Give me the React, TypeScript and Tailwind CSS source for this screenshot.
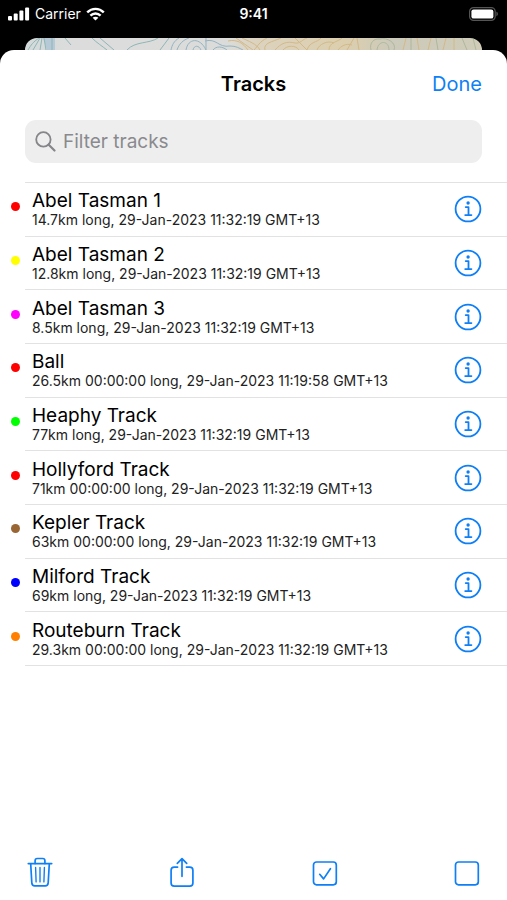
import { useState } from 'react';

interface Track {
    name: string;
    detail: string;
    color: string;
}

const TRACKS: Track[] = [
    { name: 'Abel Tasman 1', detail: '14.7km long, 29-Jan-2023 11:32:19 GMT+13', color: 'bg-[#ff0000]' },
    { name: 'Abel Tasman 2', detail: '12.8km long, 29-Jan-2023 11:32:19 GMT+13', color: 'bg-[#ffff00]' },
    { name: 'Abel Tasman 3', detail: '8.5km long, 29-Jan-2023 11:32:19 GMT+13', color: 'bg-[#ff00ff]' },
    { name: 'Ball', detail: '26.5km 00:00:00 long, 29-Jan-2023 11:19:58 GMT+13', color: 'bg-[#ff0000]' },
    { name: 'Heaphy Track', detail: '77km long, 29-Jan-2023 11:32:19 GMT+13', color: 'bg-[#00ff00]' },
    { name: 'Hollyford Track', detail: '71km 00:00:00 long, 29-Jan-2023 11:32:19 GMT+13', color: 'bg-[#ff0000]' },
    { name: 'Kepler Track', detail: '63km 00:00:00 long, 29-Jan-2023 11:32:19 GMT+13', color: 'bg-[#996633]' },
    { name: 'Milford Track', detail: '69km long, 29-Jan-2023 11:32:19 GMT+13', color: 'bg-[#0000ff]' },
    { name: 'Routeburn Track', detail: '29.3km 00:00:00 long, 29-Jan-2023 11:32:19 GMT+13', color: 'bg-[#ff8000]' },
];

// ─────────────────────────────────────────────────────────────
// Icons
// ─────────────────────────────────────────────────────────────

function SignalIcon() {
    return (
        <svg width="22" height="14" viewBox="0 0 22 14" fill="currentColor" aria-hidden="true">
            <rect x="0" y="9" width="4" height="4.5" rx="1" />
            <rect x="5.7" y="6.5" width="4" height="7" rx="1" />
            <rect x="11.4" y="3.6" width="4" height="9.9" rx="1" />
            <rect x="17.1" y="0.5" width="4" height="13" rx="1" />
        </svg>
    );
}

function WifiIcon() {
    return (
        <svg width="19" height="14" viewBox="0 0 19 14" fill="none" stroke="currentColor" strokeWidth="2.4" aria-hidden="true">
            <path d="M1.2 5.4C5.9.7 13.1.7 17.8 5.4" />
            <path d="M4.4 8.7c2.9-2.9 7.3-2.9 10.2 0" />
            <path d="M9.5 13.6 6.6 10.8c1.6-1.5 4.2-1.5 5.8 0z" fill="currentColor" stroke="none" />
        </svg>
    );
}

function BatteryIcon() {
    return (
        <svg width="30" height="14" viewBox="0 0 30 14" aria-hidden="true">
            <rect x="0.6" y="0.6" width="25.6" height="12.8" rx="4" fill="none" stroke="#555555" strokeWidth="1.2" />
            <rect x="2.4" y="2.4" width="22" height="9.2" rx="2.2" fill="#fff" />
            <path d="M27.4 4.8c2 .6 2 3.8 0 4.4z" fill="#555555" />
        </svg>
    );
}

function SearchIcon() {
    return (
        <svg width="21" height="21" viewBox="0 0 21 21" fill="none" stroke="#85858a" strokeWidth="1.8" strokeLinecap="round" aria-hidden="true">
            <circle cx="8.4" cy="8.4" r="7.2" />
            <path d="m13.7 13.7 5.8 5.8" strokeWidth="2.2" />
        </svg>
    );
}

function InfoIcon() {
    return (
        <svg width="28" height="28" viewBox="0 0 28 28" fill="none" stroke="currentColor" strokeWidth="1.8" aria-hidden="true">
            <circle cx="14" cy="14" r="12.4" />
            <circle cx="14.1" cy="8" r="1.7" fill="currentColor" stroke="none" />
            <path d="M11.7 12.1h2.8v7.8M11.2 20.1h6.2" strokeLinecap="round" strokeLinejoin="round" />
        </svg>
    );
}

function TrashIcon() {
    return (
        <svg width="26" height="32" viewBox="0 0 26 32" fill="none" stroke="currentColor" strokeWidth="1.7" strokeLinecap="round" strokeLinejoin="round" aria-hidden="true">
            <path d="M1.3 7.6h23.4" />
            <path d="M8.1 7.4V4.8c0-1.5.8-2.3 2.2-2.3h5.4c1.4 0 2.2.8 2.2 2.3v2.6" />
            <path d="m3.7 7.8 1.1 19c.1 2 1.1 3.1 3 3.1h10.4c1.9 0 2.9-1.1 3-3.1l1.1-19" />
            <path d="m8.6 11.5.5 14.4M13 11.5v14.4M17.4 11.5l-.5 14.4" strokeWidth="1.4" />
        </svg>
    );
}

function ShareIcon() {
    return (
        <svg width="26" height="32" viewBox="0 0 26 32" fill="none" stroke="currentColor" strokeWidth="1.7" strokeLinecap="round" strokeLinejoin="round" aria-hidden="true">
            <path d="M8.6 11.1H5.3c-2.2 0-3.2 1-3.2 3.2v12.6c0 2.2 1 3.2 3.2 3.2h15.4c2.2 0 3.2-1 3.2-3.2V14.3c0-2.2-1-3.2-3.2-3.2h-3.3" />
            <path d="M13 20.3V2.9M8.3 7.4 13 2.7l4.7 4.7" />
        </svg>
    );
}

function BoxIcon({ checked = false }: { checked?: boolean }) {
    return (
        <svg width="26" height="28" viewBox="0 0 26 28" fill="none" stroke="currentColor" strokeWidth="1.7" strokeLinecap="round" strokeLinejoin="round" aria-hidden="true">
            <rect x="1.5" y="2" width="22.8" height="22.8" rx="3" />
            {checked && <path d="m7.7 14.3 3.9 4.6 6.8-10.2" />}
        </svg>
    );
}

// Top edge of the topographic map that stays visible behind the sheet
function MapStrip() {
    return (
        <svg className="block w-full h-3" viewBox="0 0 457 12" preserveAspectRatio="none" fill="none" aria-hidden="true">
            <defs>
                <linearGradient id="land">
                    <stop offset="0" stopColor="#d3d9da" />
                    <stop offset="0.1" stopColor="#dcdcdc" />
                    <stop offset="0.44" stopColor="#dbdcda" />
                    <stop offset="0.5" stopColor="#dcd3c0" />
                    <stop offset="0.7" stopColor="#dccfae" />
                    <stop offset="0.8" stopColor="#cccabb" />
                    <stop offset="1" stopColor="#d0ccb9" />
                </linearGradient>
            </defs>
            <rect width="457" height="12" fill="url(#land)" />
            <path d="M18 0h12v12H22z" fill="#b5c9d6" />
            <g stroke="#8fb5b5">
                <path d="M3 12C6 7 8 4 14 0M8 12l7-12M15 12l2-12M21 12 19 0M27 12V0M40 0l6 7M67 0c5 5 10 8 15 12M75 0l14 12M102 12c8-9 22-6 31-12M135 12l9-12" />
            </g>
            <g stroke="#94b3c1">
                <path d="M146 12c1-5 3-9 8-12M152 12c2-6 6-10 12-12M161 12c2-12 14-13 20 0M168 12c1-5 6-5 8 0M181 0v12M180 3c12-3 13 7 25 5 6 0 9 2 13 4M188 12c3-4 9-4 14 0" />
            </g>
            <g stroke="#d2b988">
                <path d="M203 3c9-2 15 2 20 9M211 0l17 12M217 0c6 3 15 6 18 12M229 12c4-4 5-8 13-12M240 12c-2-7 7-8 16-12M250 12c6-7 12-9 20-7 5 1 8-4 12-5M258 12c4-5 13-5 16 0M270 0l12 12M282 12c3-9 10-7 14-12M292 12c2-6 11-10 17-7M304 12c0-8 9-8 13-12M313 12c3-4 8-7 14-5M322 12l7-12M334 12l-2-12M378 12l3-12M394 12l-2-12M403 12l3-12M418 12l3-12M429 12V0" />
            </g>
            <g stroke="#aeb79d">
                <path d="M346 12c-2-7 3-12 9-11 7-2 17 4 14 11M352 12c1-10 12-10 12 0M386 0v12M411 0l2 12M437 0l5 12M448 0l3 12" />
            </g>
        </svg>
    );
}

// ─────────────────────────────────────────────────────────────
// List row
// ─────────────────────────────────────────────────────────────

function TrackRow({ track }: { track: Track }) {
    return (
        <li className="flex items-stretch">
            <span className="flex w-[25px] shrink-0 items-center pb-[6px] pl-[11px]">
                <span className={`size-[9px] rounded-full ${track.color}`} />
            </span>
            <div className="flex min-w-0 flex-1 items-center justify-between border-b border-[#e2e2e2] pl-[7px] pr-[25px]">
                <div className="min-w-0">
                    <p className="text-[19px] leading-[22px] text-black">{track.name}</p>
                    <p className="text-[14px] leading-[16px] text-[#222222]">{track.detail}</p>
                </div>
                <button type="button" aria-label={`Details for ${track.name}`} className="shrink-0 text-[#0f7ff5]">
                    <InfoIcon />
                </button>
            </div>
        </li>
    );
}

export default function App() {
    const [filter, setFilter] = useState('');
    const visible = TRACKS.filter((t) => t.name.toLowerCase().includes(filter.toLowerCase()));

    return (
        <div className="flex min-h-screen flex-col bg-black font-['Inter','Liberation_Sans',sans-serif]">
            {/* Status bar */}
            <div className="grid h-[38px] grid-cols-3 items-center px-2 pb-3 pt-px text-white">
                <div className="flex items-center gap-[5px]">
                    <SignalIcon />
                    <span className="text-[14px] leading-4">Carrier</span>
                    <WifiIcon />
                </div>
                <span className="text-center text-[14px] font-semibold leading-4">9:41</span>
                <div className="flex justify-end">
                    <BatteryIcon />
                </div>
            </div>

            <div className="mx-[25px] overflow-hidden rounded-t-[12px]">
                <MapStrip />
            </div>

            {/* Sheet */}
            <main className="flex flex-1 flex-col rounded-t-[14px] bg-white">
                <header className="grid grid-cols-[1fr_auto_1fr] items-center px-[25px] pt-[22px]">
                    <h1 className="col-start-2 text-[20px] font-semibold leading-6 text-black">Tracks</h1>
                    <button type="button" className="justify-self-end text-[20px] leading-6 text-[#0f7ff5]">
                        Done
                    </button>
                </header>

                <label className="mx-[25px] mt-6 flex h-[43px] items-center gap-[7px] rounded-[11px] bg-[#eeeeee] px-[10px]">
                    <SearchIcon />
                    <input
                        type="text"
                        value={filter}
                        onChange={(e) => setFilter(e.target.value)}
                        placeholder="Filter tracks"
                        aria-label="Filter tracks"
                        className="min-w-0 flex-1 bg-transparent text-[19px] leading-6 text-black outline-none placeholder:text-[#8a8a8e]"
                    />
                </label>

                <div className="ml-[25px] mt-[19px] border-t border-[#e2e2e2]" />
                <ul className="grid h-[483px] auto-rows-fr">
                    {visible.map((track) => (
                        <TrackRow key={track.name} track={track} />
                    ))}
                </ul>

                {/* Toolbar */}
                <footer className="mt-auto flex items-end justify-between px-[27px] pb-[12px] text-[#0f7ff5]">
                    <button type="button" aria-label="Delete"><TrashIcon /></button>
                    <button type="button" aria-label="Share"><ShareIcon /></button>
                    <button type="button" aria-label="Select all"><BoxIcon checked /></button>
                    <button type="button" aria-label="Select none"><BoxIcon /></button>
                </footer>
            </main>
        </div>
    );
}
